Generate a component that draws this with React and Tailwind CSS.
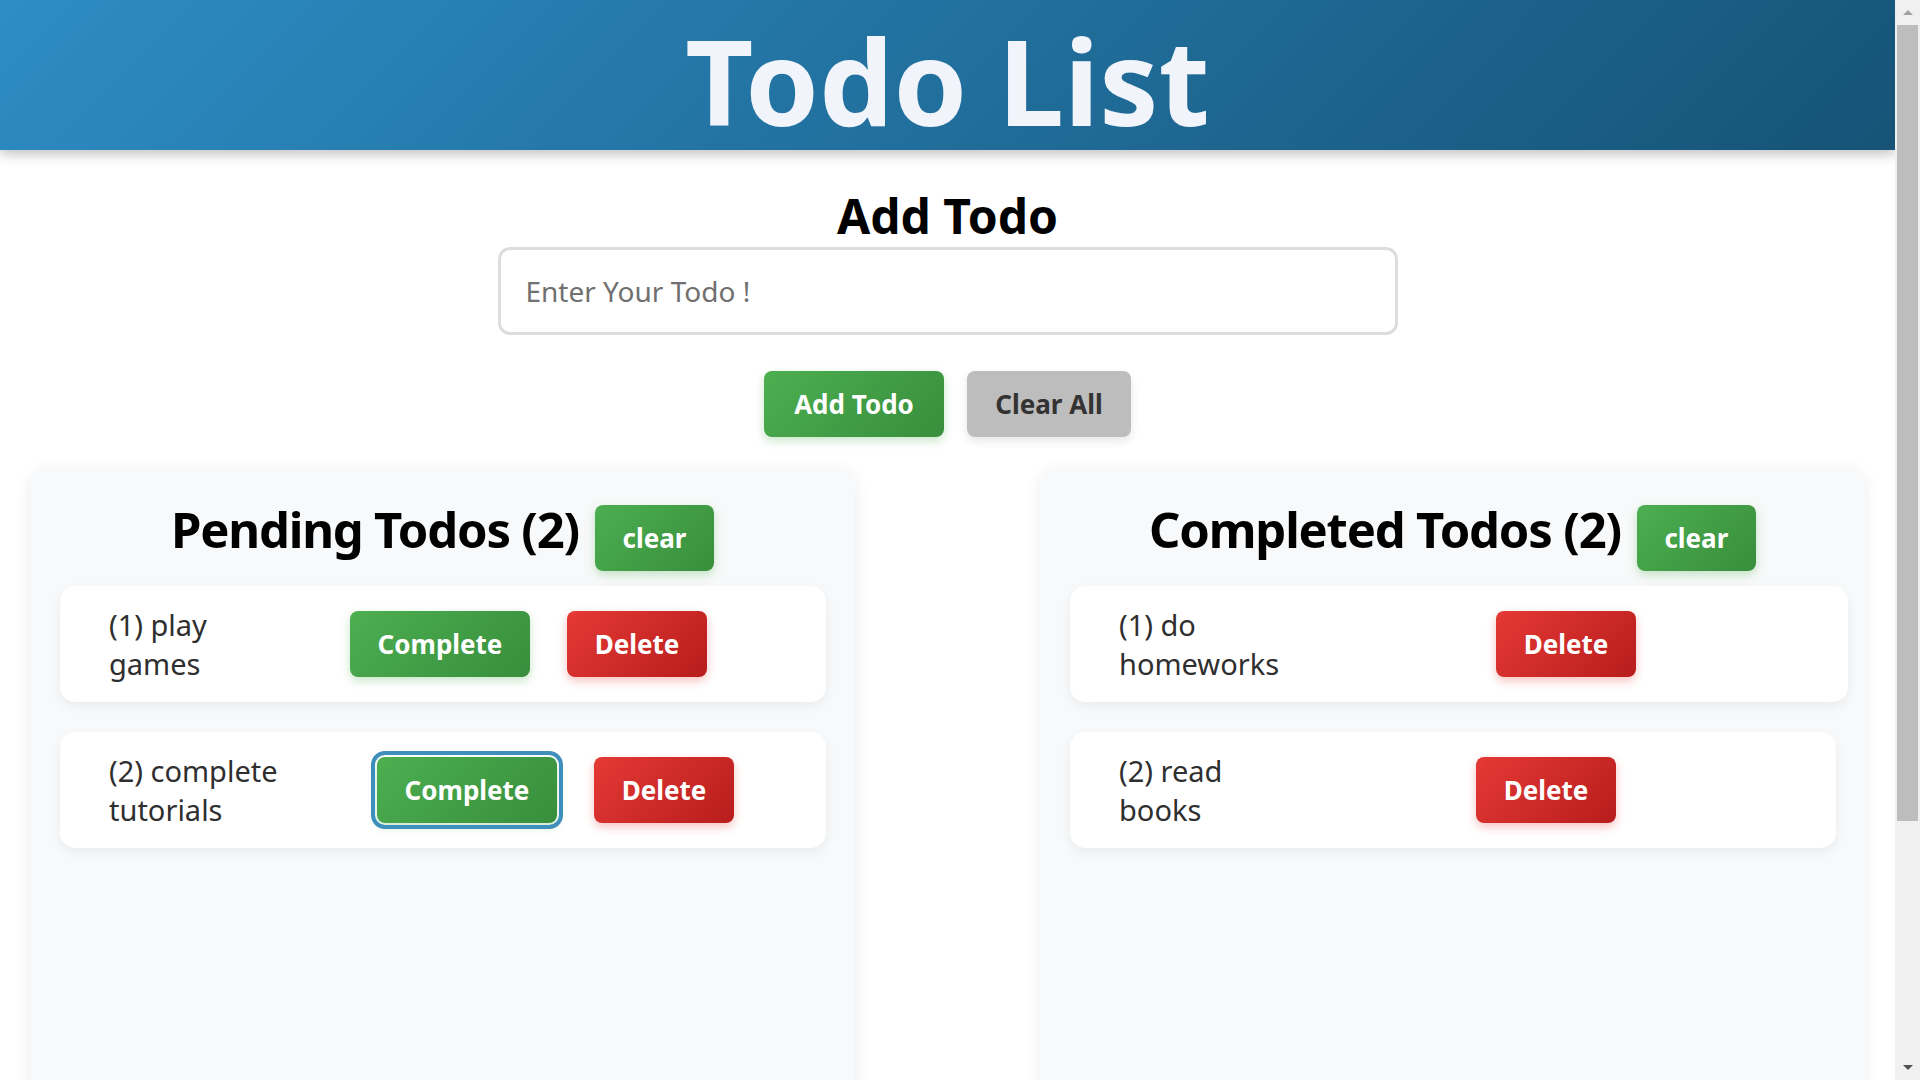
import React from "react";

function GreenBtn({ className = "", children }) {
  return (
    <button
      className={`h-[66px] shrink-0 flex items-center justify-center rounded-[8px] bg-linear-135 from-[#4caf50] to-[#388e3c] text-white text-[26px] font-bold shadow-[0_4px_10px_rgba(76,175,80,0.3)] ${className}`}
    >
      {children}
    </button>
  );
}

function RedBtn({ className = "", children }) {
  return (
    <button
      className={`h-[66px] w-[140px] shrink-0 flex items-center justify-center rounded-[8px] bg-linear-135 from-[#e53935] to-[#b71c1c] text-white text-[26px] font-bold shadow-[0_4px_10px_rgba(229,57,53,0.3)] ${className}`}
    >
      {children}
    </button>
  );
}

function Item({ width, text, children }) {
  return (
    <div
      className={`flex items-center h-[116px] pl-[49px] bg-white rounded-[15px] shadow-[0_4px_12px_rgba(0,0,0,0.06)] ${width}`}
    >
      <span className="w-[176px] shrink-0 text-[29px] leading-[39px] text-[#2f2f2f]">
        {text}
      </span>
      {children}
    </div>
  );
}

function Panel({ title, children }) {
  return (
    <div className="w-[825px] h-[900px] shrink-0 bg-[#f8f9fa] rounded-[18px] shadow-[0_4px_16px_rgba(0,0,0,0.08)] pt-[38px] px-[30px]">
      <div className="flex justify-center items-start gap-4">
        <h2 className="text-[49px] leading-none font-bold tracking-[-1.2px] text-black">{title}</h2>
        <GreenBtn className="w-[119px]">clear</GreenBtn>
      </div>
      <div className="mt-[15px] flex flex-col gap-[30px]">{children}</div>
    </div>
  );
}

function Scrollbar() {
  return (
    <div className="w-[25px] shrink-0 h-full bg-[#f0f0f0] flex flex-col">
      <div className="h-[25px] flex items-center justify-center">
        <div className="w-0 h-0 border-x-[5px] border-x-transparent border-b-[5px] border-b-[#a3a3a3]" />
      </div>
      <div className="mx-[2px] h-[796px] bg-[#bdbdbd]" />
      <div className="flex-1" />
      <div className="h-[25px] flex items-center justify-center">
        <div className="w-0 h-0 border-x-[5px] border-x-transparent border-t-[5px] border-t-[#505050]" />
      </div>
    </div>
  );
}

export default function App() {
  return (
    <div className="flex h-screen overflow-hidden bg-white font-['Noto_Sans','Open_Sans',sans-serif]">
      <div className="flex-1 min-w-0 h-full overflow-hidden">
        <header className="relative z-10 h-[150px] flex justify-center pt-[22px] bg-linear-135 from-[#2d8dc5] to-[#165377] shadow-[0_4px_12px_rgba(0,0,0,0.25)]">
          <h1 className="text-[118px] leading-[118px] font-bold text-[#f1f5fb]">Todo List</h1>
        </header>

        <main className="flex flex-col items-center">
          <h2 className="mt-[42px] text-[48px] leading-none font-bold text-black">Add Todo</h2>
          <input
            type="text"
            placeholder="Enter Your Todo !"
            className="mt-[7px] w-[900px] h-[88px] border-[3px] border-[#dddddd] rounded-[12px] px-[25px] text-[28px] text-[#333] placeholder:text-[#707070] bg-white outline-none"
          />
          <div className="mt-[36px] flex gap-[23px]">
            <GreenBtn className="w-[180px]">Add Todo</GreenBtn>
            <button className="w-[164px] h-[66px] flex items-center justify-center rounded-[8px] bg-[#bdbdbd] text-[#333] text-[26px] font-bold shadow-[0_4px_10px_rgba(0,0,0,0.1)]">
              Clear All
            </button>
          </div>
        </main>

        <section className="mt-[30px] px-[30px] pb-[30px] flex justify-between">
          <Panel title="Pending Todos (2)">
            <Item width="w-[766px]" text="(1) play games">
              <GreenBtn className="w-[180px] ml-[65px]">Complete</GreenBtn>
              <RedBtn className="ml-[37px]">Delete</RedBtn>
            </Item>
            <Item width="w-[766px]" text="(2) complete tutorials">
              <GreenBtn className="w-[180px] ml-[92px] outline-[4px] outline-solid outline-[#3f8fbc] outline-offset-[2px]">
                Complete
              </GreenBtn>
              <RedBtn className="ml-[37px]">Delete</RedBtn>
            </Item>
          </Panel>
          <Panel title="Completed Todos (2)">
            <Item width="w-[778px]" text="(1) do homeworks">
              <RedBtn className="ml-[201px]">Delete</RedBtn>
            </Item>
            <Item width="w-[766px]" text="(2) read books">
              <RedBtn className="ml-[181px]">Delete</RedBtn>
            </Item>
          </Panel>
        </section>
      </div>
      <Scrollbar />
    </div>
  );
}
